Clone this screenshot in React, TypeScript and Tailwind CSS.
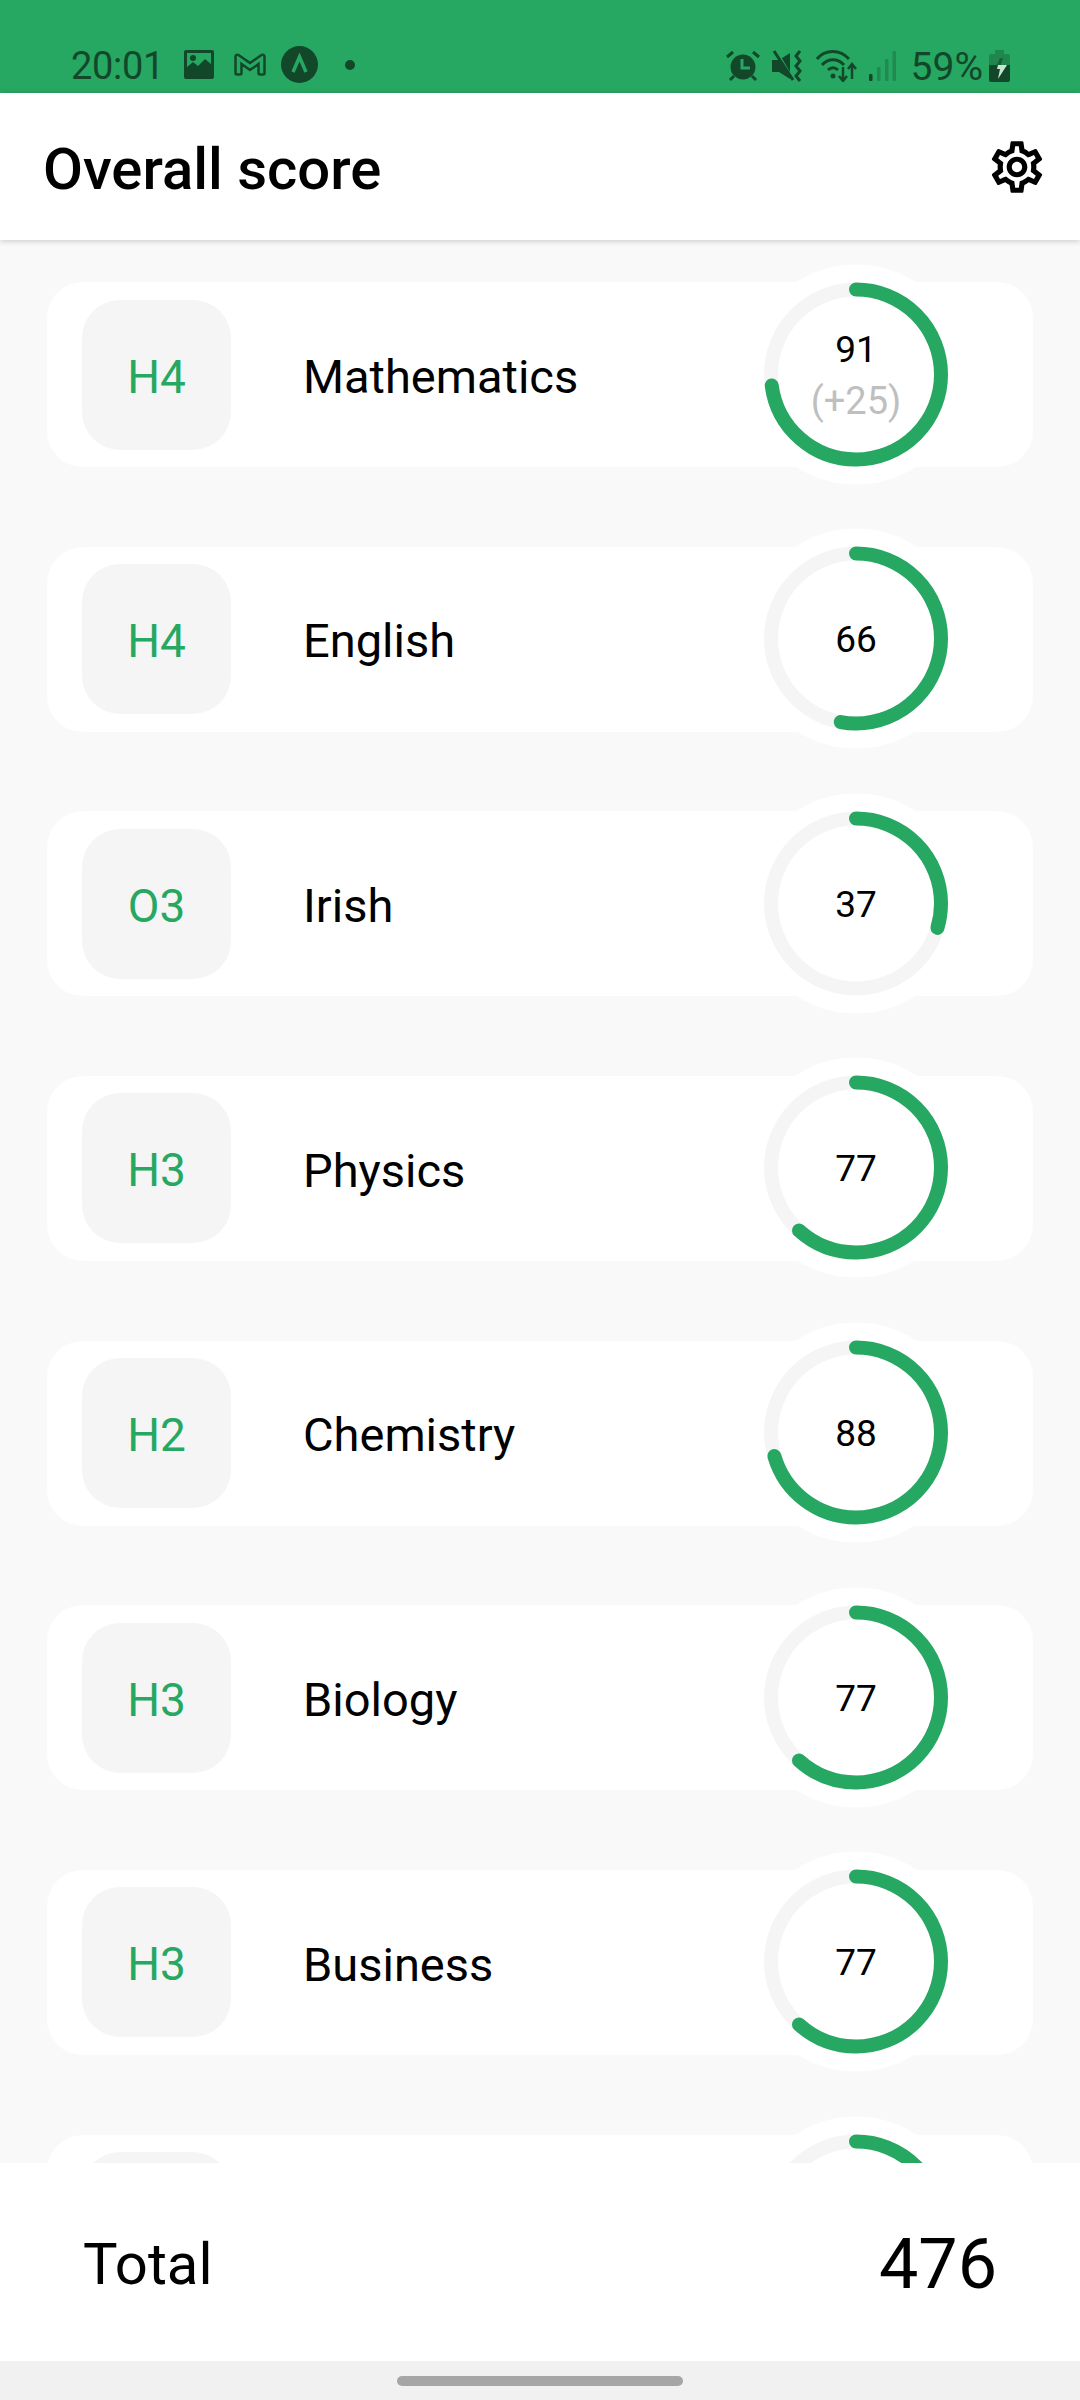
type Subject = { grade?: string; name?: string; score: number; bonus?: string };

const subjects: Subject[] = [
  { grade: 'H4', name: 'Mathematics', score: 91, bonus: '(+25)' },
  { grade: 'H4', name: 'English', score: 66 },
  { grade: 'O3', name: 'Irish', score: 37 },
  { grade: 'H3', name: 'Physics', score: 77 },
  { grade: 'H2', name: 'Chemistry', score: 88 },
  { grade: 'H3', name: 'Biology', score: 77 },
  { grade: 'H3', name: 'Business', score: 77 },
  // last row sits under the footer, only its top edge shows
  { score: 77 },
];

const DARK = '#12472a';
const GREEN = '#27a862';

function StatusIcons() {
  return (
    <div className="flex items-center">
      {/* alarm */}
      <svg width="34" height="32" viewBox="0 0 34 32" fill="none" stroke={DARK} strokeWidth="3">
        <circle cx="17" cy="17" r="12.5" fill={DARK} stroke="none" />
        <path d="M1 7l6-5M33 7l-6-5M8 26l-4 4M26 26l4 4" />
        <path d="M16 9v9h8" stroke={GREEN} />
      </svg>
      {/* vibrate + mute */}
      <svg className="ml-[12px]" width="32" height="32" viewBox="0 0 32 32" fill="none">
        <path d="M0 10h7l11 -7v26l-11-7h-7z" fill={DARK} strokeLinejoin="round" />
        <path d="M4 0l18 31" stroke={GREEN} strokeWidth="2" />
        <path d="M2 1l19 29" stroke={DARK} strokeWidth="3" />
        <path d="M28 1l-4 5 4 5-4 5 4 5-4 5 4 5" stroke={DARK} strokeWidth="3" />
      </svg>
      {/* wifi + data arrows */}
      <svg className="ml-[12px]" width="41" height="32" viewBox="0 0 41 32" fill="none" stroke={DARK} strokeWidth="3">
        <path d="M1 9C9 -1 24 -1 33 9" />
        <path d="M6 15C12 8 22 8 28 15" />
        <path d="M12 20C15 17 19 17 22 20" />
        <circle cx="17" cy="26" r="2.5" fill={DARK} stroke="none" />
        <path d="M27 17v13M23 26l4 5 4-5" strokeWidth="2.5" />
        <path d="M36 29V15M32 19l4-5 4 5" strokeWidth="2.5" />
      </svg>
      {/* signal */}
      <svg className="ml-[12px]" width="27" height="30" viewBox="0 0 27 30">
        <rect x="0" y="23" width="3.5" height="7" rx="1" fill={DARK} />
        <rect x="8" y="16" width="3.5" height="14" rx="1" fill={DARK} opacity="0.3" />
        <rect x="16" y="8" width="3.5" height="22" rx="1" fill={DARK} opacity="0.3" />
        <rect x="23.5" y="0" width="3.5" height="30" rx="1" fill={DARK} opacity="0.3" />
      </svg>
      <span className="ml-[15px] pt-[2px] text-[39px] leading-[38px]" style={{ color: DARK }}>
        59%
      </span>
      {/* battery */}
      <svg className="ml-[6px]" width="21" height="32" viewBox="0 0 21 32">
        <path d="M6 0h9v4h4a2 2 0 0 1 2 2v9H0V6a2 2 0 0 1 2-2h4z" fill={DARK} opacity="0.35" />
        <path d="M0 15h21v15a2 2 0 0 1-2 2H2a2 2 0 0 1-2-2z" fill={DARK} />
        <path d="M11 8h3l-2 7h6l-9 14 2-10H6z" fill={DARK} opacity="0.6" />
        <path d="M9 15h9l-9 14 2-10H8z" fill="#c5e6d3" />
      </svg>
    </div>
  );
}

function StatusBar() {
  return (
    <div className="h-[93px] bg-[#27a862] pl-[71px] pr-[70px] pt-[46px] flex items-start justify-between">
      <div className="flex items-center h-[37px]">
        <span className="pt-[2px] text-[38px] leading-[38px] tracking-[-0.3px]" style={{ color: DARK }}>
          20:01
        </span>
        <svg className="ml-[20px]" width="30" height="29" viewBox="0 0 30 29">
          <path
            fillRule="evenodd"
            d="M2 0h26a2 2 0 0 1 2 2v25a2 2 0 0 1-2 2H2a2 2 0 0 1-2-2V2a2 2 0 0 1 2-2zM3 3v14l6-5 5 4 7-7 6 5V3z"
            fill={DARK}
          />
          <circle cx="9" cy="8" r="3" fill={DARK} />
        </svg>
        <svg className="ml-[20px]" width="32" height="23" viewBox="0 0 32 23" fill="none">
          <path
            d="M1.500 3.500a2 2 0 0 1 3-1.500L16 10 27.500 2a2 2 0 0 1 3 1.500V20a1.500 1.500 0 0 1-1.500 1.500h-3a1.500 1.500 0 0 1-1.500-1.500V11L16 17 7.500 11v9A1.500 1.500 0 0 1 6 21.500H3A1.500 1.500 0 0 1 1.500 20z"
            stroke={DARK}
            strokeWidth="2.500"
          />
        </svg>
        <svg className="ml-[15px]" width="37" height="37" viewBox="0 0 37 37" fill="none">
          <circle cx="18.500" cy="18.500" r="18.500" fill={DARK} />
          <path d="M12 26l6.500-15L25 26" stroke={GREEN} strokeWidth="3.500" />
        </svg>
        <div className="ml-[27px] w-[10px] h-[10px] rounded-full" style={{ backgroundColor: DARK }} />
      </div>
      <StatusIcons />
    </div>
  );
}

function ScoreRing({ score, bonus, showScore }: { score: number; bonus?: string; showScore: boolean }) {
  const radius = 85;
  const circumference = 2 * Math.PI * radius;
  const arc = (score / 125) * circumference;

  return (
    <div className="relative w-[220px] h-[220px] shrink-0 rounded-full bg-white flex flex-col items-center justify-center mr-[67px] -translate-y-[0.5px]">
      <svg className="absolute inset-0" width="220" height="220" viewBox="0 0 220 220" fill="none">
        <circle cx="110" cy="110" r={radius} stroke="#f5f5f5" strokeWidth="14" />
        <circle
          cx="110"
          cy="110"
          r={radius}
          stroke={GREEN}
          strokeWidth="14"
          strokeLinecap="round"
          strokeDasharray={`${arc} ${circumference}`}
          transform="rotate(-90 110 110)"
        />
      </svg>
      {showScore && <span className="relative pt-[2px] text-[37px] leading-[50px] text-black">{score}</span>}
      {bonus && <span className="relative pt-[1px] text-[38px] leading-[50px] text-[#bfbfbf]">{bonus}</span>}
    </div>
  );
}

function SubjectRow({ grade, name, score, bonus }: Subject) {
  return (
    <div className="h-[185px] shrink-0 bg-white rounded-[36px] pl-[35px] flex items-center">
      <div className="w-[149px] h-[150px] shrink-0 bg-[#f5f5f5] rounded-[38px] pt-[5px] flex items-center justify-center text-[46px] text-[#27a862]">
        {grade}
      </div>
      <div className="ml-[72px] flex-1 pt-[5px] text-[47px] text-black">{name}</div>
      <ScoreRing score={score} bonus={bonus} showScore={Boolean(name)} />
    </div>
  );
}

export default function App() {
  return (
    <div className="w-[1080px] h-[2400px] flex flex-col overflow-hidden bg-[#f9f9f9] font-['Roboto',sans-serif]">
      <StatusBar />
      <header className="relative z-10 h-[147px] shrink-0 bg-white shadow-[0_1px_6px_rgba(0,0,0,0.2)] pl-[43px] pr-[32px] flex items-center justify-between">
        <h1 className="pt-[5px] text-[58px] font-medium text-black">Overall score</h1>
        <svg width="62" height="62" viewBox="0 0 24 24" fill="#000">
          <path d="M19.430 12.980c.040-.320.070-.640.070-.980 0-.340-.030-.660-.070-.980l2.110-1.650c.190-.150.240-.420.120-.640l-2-3.460c-.090-.160-.260-.250-.440-.250-.060 0-.120.010-.170.030l-2.490 1c-.520-.400-1.080-.730-1.690-.980l-.380-2.650C14.460 2.180 14.250 2 14 2h-4c-.250 0-.460.180-.490.420l-.380 2.650c-.610.250-1.170.590-1.690.980l-2.490-1c-.060-.020-.120-.030-.180-.030-.170 0-.340.090-.430.250l-2 3.460c-.130.220-.070.490.120.640l2.110 1.650c-.040.320-.070.650-.070.980 0 .330.030.660.070.980l-2.110 1.650c-.190.150-.240.420-.120.640l2 3.460c.090.160.260.250.440.250.060 0 .120-.010.170-.030l2.490-1c.520.400 1.080.730 1.690.980l.380 2.650c.030.240.240.420.490.420h4c.250 0 .460-.180.490-.420l.380-2.650c.610-.250 1.170-.590 1.690-.980l2.490 1c.060.020.120.030.180.030.170 0 .340-.090.430-.250l2-3.460c.120-.220.070-.490-.120-.640l-2.110-1.650zm-1.980-1.710c.040.310.050.520.050.730 0 .210-.020.430-.050.730l-.140 1.130.890.700 1.080.840-.700 1.210-1.270-.510-1.040-.420-.900.680c-.430.320-.840.560-1.250.730l-1.060.430-.160 1.130-.200 1.350h-1.400l-.190-1.350-.160-1.130-1.060-.430c-.430-.180-.830-.410-1.230-.710l-.910-.700-1.060.430-1.270.510-.700-1.210 1.080-.840.890-.700-.140-1.130c-.030-.310-.050-.540-.050-.740s.020-.430.050-.730l.140-1.130-.890-.700-1.080-.840.700-1.210 1.270.510 1.040.420.900-.680c.430-.320.840-.560 1.250-.730l1.060-.430.160-1.130.200-1.350h1.390l.190 1.350.160 1.130 1.060.430c.430.180.830.410 1.230.710l.910.700 1.060-.430 1.270-.510.700 1.210-1.070.85-.890.700.140 1.130zM12 8c-2.210 0-4 1.790-4 4s1.790 4 4 4 4-1.790 4-4-1.790-4-4-4zm0 6c-1.100 0-2-.900-2-2s.900-2 2-2 2 .900 2 2-.900 2-2 2z" />
        </svg>
      </header>
      <main className="flex-1 min-h-0 overflow-hidden pt-[42px] pl-[47px] pr-[47px] flex flex-col gap-[79.67px]">
        {subjects.map((s, i) => (
          <SubjectRow key={i} {...s} />
        ))}
      </main>
      <footer className="relative h-[198px] shrink-0 bg-white pl-[83px] pr-[83px] pt-[5px] flex items-center justify-between text-black">
        <span className="text-[58px]">Total</span>
        <span className="text-[70px]">476</span>
      </footer>
      <div className="h-[39px] shrink-0 bg-[#f1f1f1] flex items-center justify-center">
        <div className="w-[286px] h-[10px] rounded-full bg-[#a6a6a6]" />
      </div>
    </div>
  );
}
